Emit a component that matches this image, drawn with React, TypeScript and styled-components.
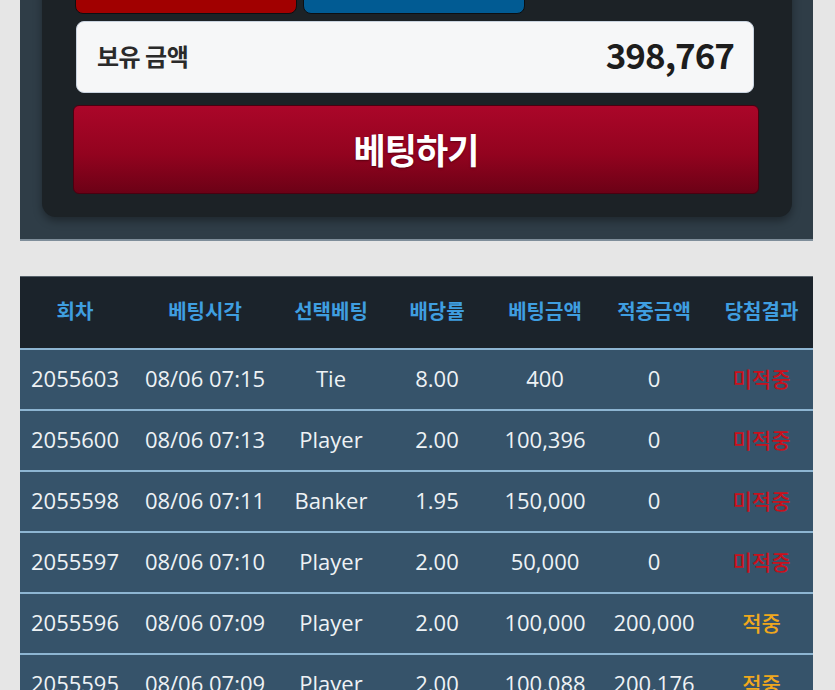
import styled, { createGlobalStyle } from "styled-components";

const GlobalStyle = createGlobalStyle`
    html, body {
        margin: 0;
        padding: 0;
        background: #e6e6e6;
        font-family: "Open Sans", "Noto Sans CJK KR", sans-serif;
        overflow: hidden;
    }
`

const Page = styled.div`
    width: 835px;
    padding: 0 22px 0 20px;
    box-sizing: border-box;
    margin-top: -40px;
`

const BetPanel = styled.div`
    background: #2f3d47;
    border-bottom: 2px solid #7f8e9a;
    padding: 0 21px 22px 22px;
`

const PanelInner = styled.div`
    background: #1c2226;
    border-radius: 0 0 14px 14px;
    box-shadow: 0 4px 8px rgba(0, 0, 0, 0.35);
    padding: 0 38px 23px 31px;
    display: flex;
    flex-direction: column;
`

const ChipRow = styled.div`
    display: flex;
    gap: 6px;
    padding-left: 2px;
`

const ChipButton = styled.div<{ $color: string }>`
    width: 222px;
    height: 54px;
    background: ${p => p.$color};
    border: 1px solid #0c0f12;
    border-radius: 8px;
    box-sizing: border-box;
`

const BalanceBox = styled.div`
    margin: 7px 0 0 3px;
    height: 72px;
    background: #f6f7f8;
    border: 1px solid #c9d3df;
    border-radius: 8px;
    box-sizing: border-box;
    display: flex;
    align-items: center;
    justify-content: space-between;
    padding: 0 19px 4px 20px;
    font-family: "Noto Sans CJK KR", sans-serif;
    color: #1d1d1d;
`

const BalanceLabel = styled.span`
    font-size: 24px;
    font-weight: 700;
    color: #2a2a2a;
    letter-spacing: -0.5px;
`

const BalanceValue = styled.span`
    font-size: 35px;
    font-weight: 700;
    letter-spacing: -1px;
    margin-bottom: 4px;
`

const BetButton = styled.div`
    margin: 12px -5px 0 0;
    height: 89px;
    background: linear-gradient(to bottom, #ab0629 0%, #93031f 55%, #6c0116 100%);
    border: 1px solid #4a0010;
    border-radius: 6px;
    box-sizing: border-box;
    display: flex;
    align-items: center;
    justify-content: center;
    padding-bottom: 2px;
    font-family: "Noto Sans CJK KR", sans-serif;
    font-size: 35px;
    font-weight: 700;
    color: #fff;
    letter-spacing: -1px;
    text-shadow: 0 1px 2px rgba(0, 0, 0, 0.4);
`

const Table = styled.div`
    margin-top: 35px;
    width: 793px;
`

const cols = "110px 150px 102px 110px 106px 112px 103px"

const HeaderRow = styled.div`
    display: grid;
    grid-template-columns: ${cols};
    height: 72px;
    align-items: center;
    padding-bottom: 4px;
    background: #1b232b;
    border-top: 1px solid #56616a;
    box-sizing: border-box;
`

const HeaderCell = styled.div`
    text-align: center;
    font-family: "Noto Sans CJK KR", sans-serif;
    font-size: 20px;
    font-weight: 700;
    color: #3f9ee0;
`

const Row = styled.div`
    display: grid;
    grid-template-columns: ${cols};
    height: 61px;
    align-items: center;
    padding-bottom: 4px;
    background: #36536a;
    border-top: 2px solid #8db5d2;
    box-sizing: border-box;
`

const Cell = styled.div<{ $color?: string }>`
    text-align: center;
    font-size: 22px;
    color: ${p => p.$color || "#eef2f5"};
    white-space: nowrap;
`

const ResultCell = styled(Cell)`
    font-family: "Noto Sans CJK KR", sans-serif;
    font-size: 21px;
    font-weight: 500;
`

const headers = ["회차", "베팅시각", "선택베팅", "배당률", "베팅금액", "적중금액", "당첨결과"]

const bets = [
    { round: "2055603", time: "08/06 07:15", pick: "Tie", odds: "8.00", amount: "400", win: "0", hit: false },
    { round: "2055600", time: "08/06 07:13", pick: "Player", odds: "2.00", amount: "100,396", win: "0", hit: false },
    { round: "2055598", time: "08/06 07:11", pick: "Banker", odds: "1.95", amount: "150,000", win: "0", hit: false },
    { round: "2055597", time: "08/06 07:10", pick: "Player", odds: "2.00", amount: "50,000", win: "0", hit: false },
    { round: "2055596", time: "08/06 07:09", pick: "Player", odds: "2.00", amount: "100,000", win: "200,000", hit: true },
    { round: "2055595", time: "08/06 07:09", pick: "Player", odds: "2.00", amount: "100,088", win: "200,176", hit: true },
]

const App = () => {
    return (
        <>
        <GlobalStyle />
        <Page>
            <BetPanel>
                <PanelInner>
                    <ChipRow>
                        <ChipButton $color="#a10000" />
                        <ChipButton $color="#015b93" />
                    </ChipRow>
                    <BalanceBox>
                        <BalanceLabel>보유 금액</BalanceLabel>
                        <BalanceValue>398,767</BalanceValue>
                    </BalanceBox>
                    <BetButton>베팅하기</BetButton>
                </PanelInner>
            </BetPanel>
            <Table>
                <HeaderRow>
                    {headers.map(h => <HeaderCell key={h}>{h}</HeaderCell>)}
                </HeaderRow>
                {bets.map(b => (
                    <Row key={b.round}>
                        <Cell>{b.round}</Cell>
                        <Cell>{b.time}</Cell>
                        <Cell>{b.pick}</Cell>
                        <Cell>{b.odds}</Cell>
                        <Cell>{b.amount}</Cell>
                        <Cell>{b.win}</Cell>
                        <ResultCell $color={b.hit ? "#f0a81c" : "#c8101c"}>{b.hit ? "적중" : "미적중"}</ResultCell>
                    </Row>
                ))}
            </Table>
        </Page>
        </>
    )
};

export default App;
